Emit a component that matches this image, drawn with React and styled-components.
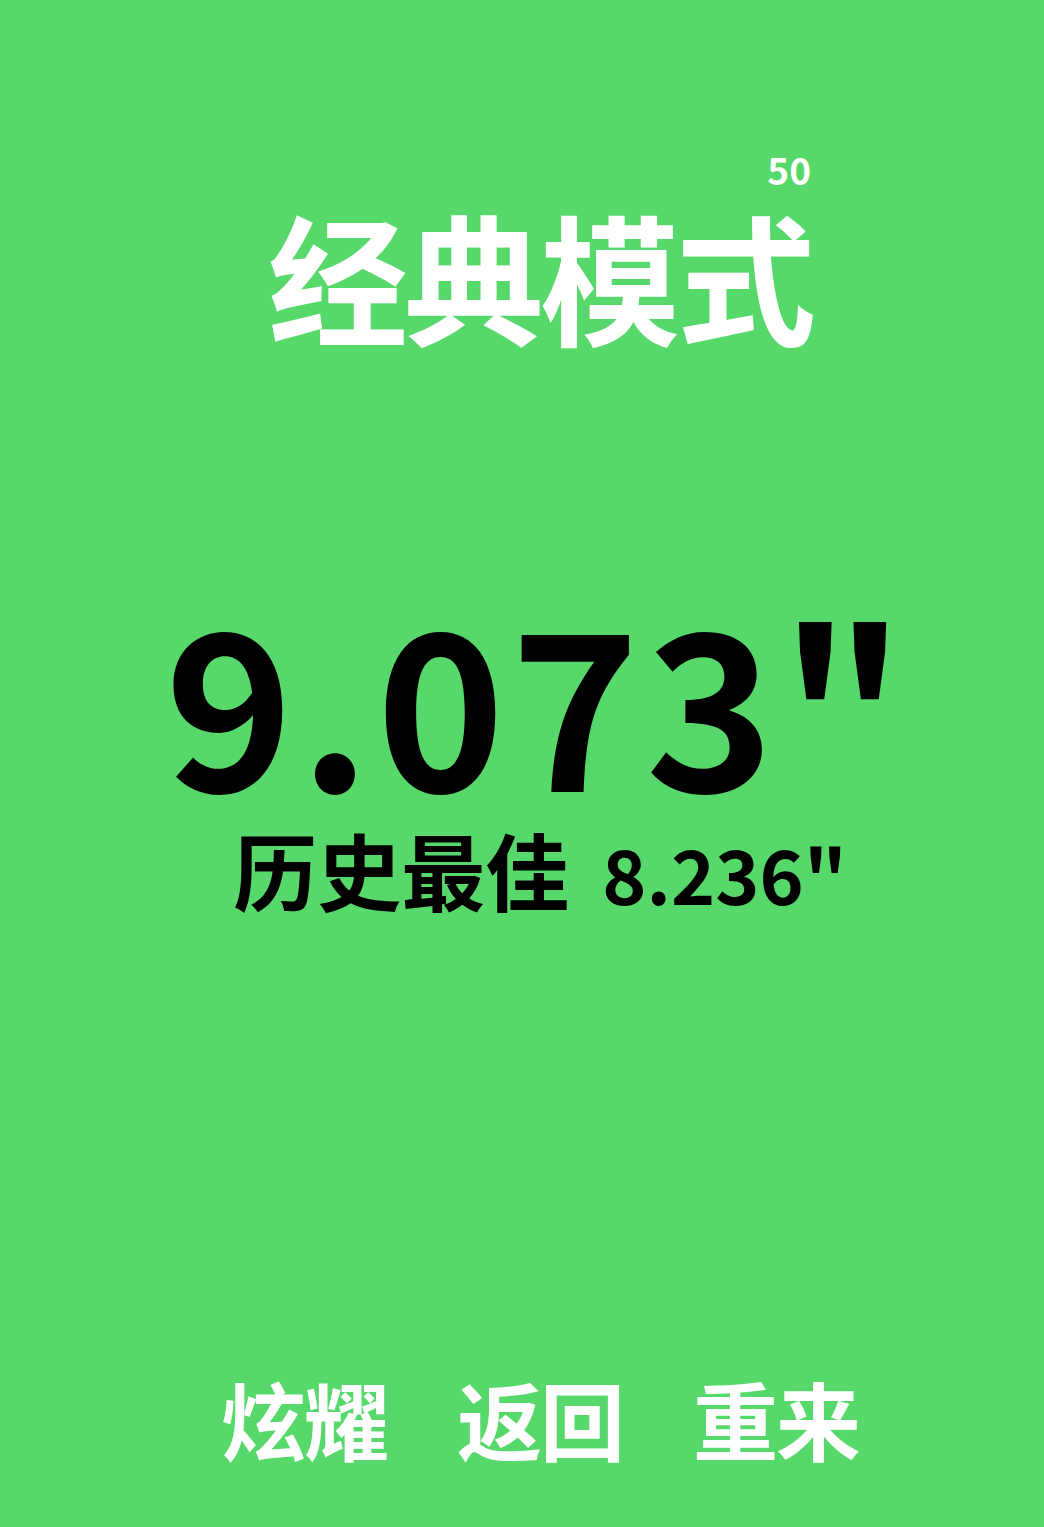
import React from "react";
import styled, { createGlobalStyle } from "styled-components";

const Global = createGlobalStyle`
  html, body { margin: 0; padding: 0; background: #56d86a; }
  body { font-family: "Noto Sans CJK SC", "Noto Sans", sans-serif; }
`;

const Page = styled.div`
  width: 1044px;
  height: 1527px;
  background: #56d86a;
  display: flex;
  flex-direction: column;
  align-items: center;
  padding-left: 36px;
  box-sizing: border-box;
`;

const TitleWrap = styled.div`
  position: relative;
  margin-top: 204px;
`;

const Title = styled.h1`
  margin: 0;
  font-size: 140px;
  line-height: 1;
  font-weight: 700;
  color: #fff;
  letter-spacing: -4px;
`;

const Level = styled.span`
  position: absolute;
  right: 1px;
  top: -53px;
  font-size: 37px;
  line-height: 1;
  font-weight: 700;
  color: #fff;
`;

const Score = styled.div`
  margin-top: 244px;
  margin-left: -4px;
  font-size: 218px;
  line-height: 1;
  font-weight: 700;
  letter-spacing: 6px;
  color: #000;
`;

const Best = styled.div`
  margin-top: 21px;
  line-height: 1;
  font-weight: 700;
  color: #000;
  display: flex;
  align-items: baseline;
  gap: 33px;
`;

const BestLabel = styled.span`
  font-size: 84px;
`;

const BestTime = styled.span`
  font-size: 75px;
`;

const Spacer = styled.div`
  flex: 1;
`;

const Actions = styled.div`
  display: flex;
  gap: 70px;
  margin-bottom: 67px;
`;

const Action = styled.button`
  background: none;
  border: none;
  padding: 0;
  font-family: inherit;
  font-size: 85px;
  line-height: 1;
  font-weight: 700;
  color: #fff;
  letter-spacing: -2px;
  cursor: pointer;
`;

export default function App() {
  return (
    <>
      <Global />
      <Page>
        <TitleWrap>
          <Title>经典模式</Title>
          <Level>50</Level>
        </TitleWrap>
        <Score>9.073"</Score>
        <Best>
          <BestLabel>历史最佳</BestLabel>
          <BestTime>8.236"</BestTime>
        </Best>
        <Spacer />
        <Actions>
          <Action>炫耀</Action>
          <Action>返回</Action>
          <Action>重来</Action>
        </Actions>
      </Page>
    </>
  );
}
